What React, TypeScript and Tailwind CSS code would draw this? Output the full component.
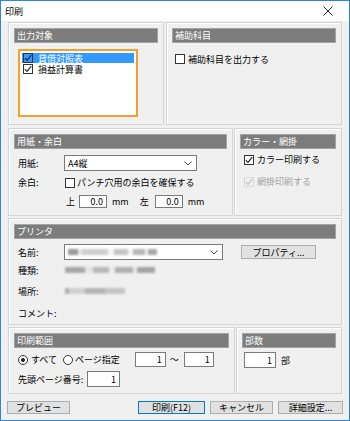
import React from "react";

type GroupProps = {
  title: string;
  className?: string;
  children?: React.ReactNode;
};

const Group = ({ title, className, children }: GroupProps) => (
  <div
    className={`border border-[#d5d5d5] shadow-[inset_1px_1px_0_#ffffff] px-[5px] pt-[5px] flex flex-col ${className ?? ""}`}
  >
    <div className="h-[15px] shrink-0 bg-[#7c7c7c] border border-[#a4a4a4] text-white text-[9px] leading-[13px] pl-[2px]">
      {title}
    </div>
    {children}
  </div>
);

const Check = ({ color = "#222" }: { color?: string }) => (
  <svg width="8" height="8" viewBox="0 0 8 8" fill="none">
    <path d="M0.8 4.2 L3 6.4 L7.3 1.2" stroke={color} strokeWidth="1.1" />
  </svg>
);

const Checkbox = ({
  checked,
  disabled,
  transparent,
}: {
  checked?: boolean;
  disabled?: boolean;
  transparent?: boolean;
}) => (
  <div
    className={`w-[10px] h-[10px] shrink-0 border flex items-center justify-center ${
      disabled ? "border-[#d8d8d8]" : "border-[#333333]"
    } ${transparent ? "" : "bg-white"}`}
  >
    {checked && <Check color={disabled ? "#bdbdbd" : "#222"} />}
  </div>
);

const Radio = ({ checked }: { checked?: boolean }) => (
  <div className="w-[10px] h-[10px] shrink-0 rounded-full border border-[#333333] bg-white flex items-center justify-center">
    {checked && <div className="w-[4px] h-[4px] rounded-full bg-[#222]" />}
  </div>
);

const NumBox = ({ value, className }: { value: string; className?: string }) => (
  <div
    className={`border border-[#7a7a7a] bg-white text-[9px] leading-none flex items-center justify-end pr-[3px] ${className ?? ""}`}
  >
    {value}
  </div>
);

const Chevron = () => (
  <svg width="8" height="5" viewBox="0 0 8 5" fill="none">
    <path d="M0.5 0.5 L4 4 L7.5 0.5" stroke="#444" strokeWidth="1" />
  </svg>
);

const Blur = ({ tones }: { tones: [number, string][] }) => (
  <div className="flex items-center blur-[0.8px]">
    {tones.map(([w, c], i) => (
      <div key={i} className="h-[6px]" style={{ width: w, background: c }} />
    ))}
  </div>
);

const Button = ({ label, primary, className }: { label: string; primary?: boolean; className?: string }) => (
  <div
    className={`h-[13px] flex items-center justify-center bg-[#e1e1e1] border text-[9px] leading-none ${
      primary ? "border-[#0078d7]" : "border-[#adadad]"
    } ${className ?? ""}`}
  >
    {label}
  </div>
);

export default function App() {
  return (
    <div className="w-[350px] h-[421px] border border-[#2b87d6] bg-[#f0f0f0] flex flex-col font-['Noto_Sans_CJK_JP','Noto_Sans',sans-serif] text-black text-[9px] leading-none overflow-hidden">
      {/* title bar */}
      <div className="h-[20px] shrink-0 bg-white flex items-center justify-between pl-[4px] pr-[16px]">
        <span className="text-[9px]">印刷</span>
        <svg width="10" height="10" viewBox="0 0 10 10" fill="none">
          <path d="M0.5 0.5 L9.5 9.5 M9.5 0.5 L0.5 9.5" stroke="#222" strokeWidth="1" />
        </svg>
      </div>

      <div className="flex flex-col px-[7px]">
        {/* row 1 */}
        <div className="flex gap-[2px] mt-[1px] h-[103px]">
          <Group title="出力対象" className="w-[156px]">
            <div className="ml-[4px] mt-[6px] w-[120px] h-[68px] border-2 border-[#f2a030] bg-white p-[2px] flex flex-col gap-[1px]">
              <div className="h-[10px] bg-[#3399ff] flex items-center gap-[5px] pl-[1px] text-white">
                <Checkbox checked transparent />
                <span>貸借対照表</span>
              </div>
              <div className="h-[10px] flex items-center gap-[5px] pl-[1px]">
                <Checkbox checked />
                <span>損益計算書</span>
              </div>
            </div>
          </Group>
          <Group title="補助科目" className="w-[176px]">
            <div className="ml-[3px] mt-[11px] flex items-center gap-[3px]">
              <Checkbox />
              <span>補助科目を出力する</span>
            </div>
          </Group>
        </div>

        {/* row 2 */}
        <div className="flex gap-[1px] mt-[3px] h-[88px]">
          <Group title="用紙・余白" className="w-[225px]">
            <div className="mt-[6px] ml-[4px] flex items-center h-[16px]">
              <span className="w-[46px]">用紙:</span>
              <div className="w-[133px] h-[16px] border border-[#7a7a7a] bg-white flex items-center justify-between pl-[3px] pr-[4px]">
                <span>A4縦</span>
                <Chevron />
              </div>
            </div>
            <div className="mt-[5px] ml-[4px] flex items-center h-[13px]">
              <span className="w-[47px]">余白:</span>
              <Checkbox />
              <span className="ml-[2px]">パンチ穴用の余白を確保する</span>
            </div>
            <div className="mt-[6px] ml-[52px] flex items-center h-[13px]">
              <span>上</span>
              <NumBox value="0.0" className="ml-[4px] w-[28px] h-[13px]" />
              <span className="ml-[5px]">mm</span>
              <span className="ml-[11px]">左</span>
              <NumBox value="0.0" className="ml-[6px] w-[28px] h-[13px]" />
              <span className="ml-[5px]">mm</span>
            </div>
          </Group>
          <Group title="カラー・網掛" className="w-[108px]">
            <div className="mt-[5px] ml-[4px] flex items-center gap-[3px] h-[11px]">
              <Checkbox checked />
              <span>カラー印刷する</span>
            </div>
            <div className="mt-[11px] ml-[4px] flex items-center gap-[3px] h-[11px] text-[#a0a0a0]">
              <Checkbox checked disabled transparent />
              <span>網掛印刷する</span>
            </div>
          </Group>
        </div>

        {/* row 3 */}
        <Group title="プリンタ" className="mt-[2px] h-[107px]">
          <div className="mt-[5px] ml-[4px] flex items-center h-[16px]">
            <span className="w-[46px]">名前:</span>
            <div className="w-[159px] h-[16px] border border-[#7a7a7a] bg-white flex items-center justify-between pl-[3px] pr-[4px]">
              <Blur
                tones={[
                  [10, "#9a9a9a"],
                  [4, "#e6e6e6"],
                  [26, "#cfcfcf"],
                  [6, "#f4f4f4"],
                  [14, "#c4c4c4"],
                  [5, "#f4f4f4"],
                  [12, "#b6b6b6"],
                  [3, "#eeeeee"],
                  [9, "#a8a8a8"],
                ]}
              />
              <Chevron />
            </div>
            <Button label="プロパティ..." className="ml-[18px] w-[75px] h-[14px]" />
          </div>
          <div className="mt-[4px] ml-[4px] flex items-center h-[12px]">
            <span className="w-[47px]">種類:</span>
            <Blur
              tones={[
                [20, "#a8a8a8"],
                [8, "#e4e4e4"],
                [16, "#b8b8b8"],
                [6, "#ececec"],
                [18, "#b0b0b0"],
                [4, "#e8e8e8"],
                [18, "#a4a4a4"],
              ]}
            />
          </div>
          <div className="mt-[9px] ml-[4px] flex items-center h-[12px]">
            <span className="w-[47px]">場所:</span>
            <Blur
              tones={[
                [4, "#b0b0b0"],
                [16, "#d0d0d0"],
                [20, "#b4b4b4"],
                [20, "#c4c4c4"],
              ]}
            />
          </div>
          <div className="mt-[10px] ml-[4px] flex items-center h-[12px]">
            <span>コメント:</span>
          </div>
        </Group>

        {/* row 4 */}
        <div className="flex gap-[1px] mt-[2px] h-[67px]">
          <Group title="印刷範囲" className="w-[227px]">
            <div className="mt-[4px] ml-[4px] flex items-center h-[15px]">
              <Radio checked />
              <span className="ml-[3px]">すべて</span>
              <div className="ml-[6px]">
                <Radio />
              </div>
              <span className="ml-[2px]">ページ指定</span>
              <NumBox value="1" className="ml-[15px] w-[31px] h-[15px]" />
              <span className="ml-[4px]">〜</span>
              <NumBox value="1" className="ml-[5px] w-[30px] h-[15px]" />
            </div>
            <div className="mt-[4px] ml-[4px] flex items-center h-[16px]">
              <span className="w-[69px]">先頭ページ番号:</span>
              <NumBox value="1" className="w-[33px] h-[16px]" />
            </div>
          </Group>
          <Group title="部数" className="w-[106px]">
            <div className="mt-[4px] ml-[2px] flex items-center h-[16px]">
              <NumBox value="1" className="w-[32px] h-[16px]" />
              <span className="ml-[5px]">部</span>
            </div>
          </Group>
        </div>

        {/* buttons */}
        <div className="mt-[7px] -ml-px -mr-px flex items-center">
          <Button label="プレビュー" className="w-[63px]" />
          <div className="ml-auto flex gap-[5px]">
            <Button label="印刷(F12)" primary className="w-[67px]" />
            <Button label="キャンセル" className="w-[63px]" />
            <Button label="詳細設定..." className="w-[65px]" />
          </div>
        </div>
      </div>
    </div>
  );
}
